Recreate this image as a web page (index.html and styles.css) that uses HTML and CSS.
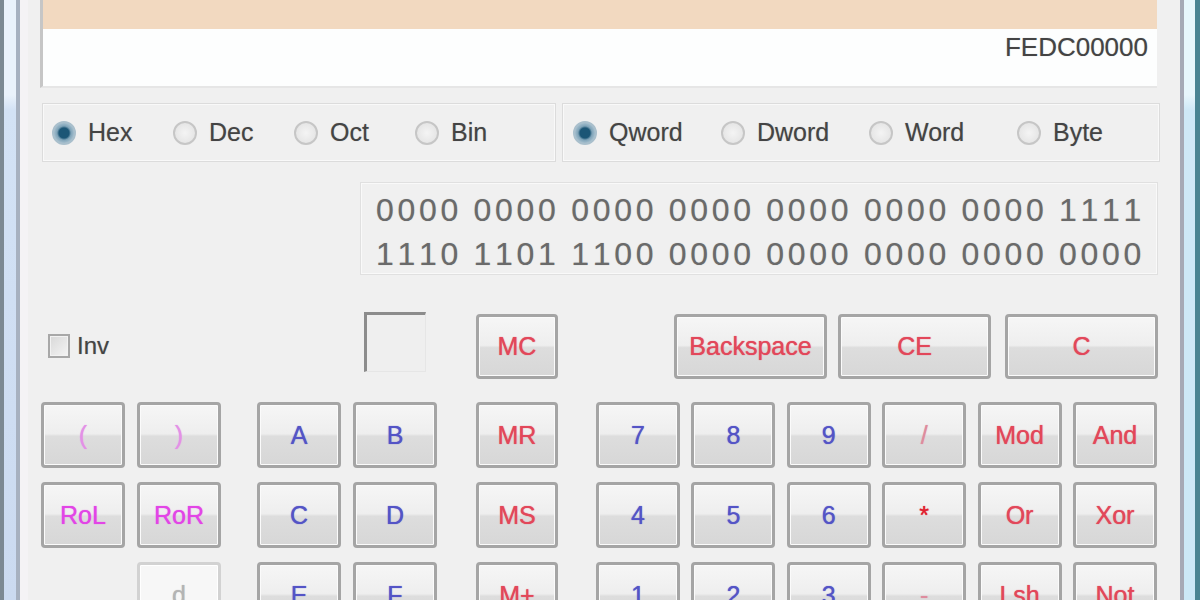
FILE: index.html
```html
<!DOCTYPE html>
<html>
<head>
<meta charset="utf-8">
<link rel="stylesheet" href="styles.css">
</head>
<body>
<div class="window">
  <div class="frame-left"><div class="fl-a"></div><div class="fl-b"></div><div class="fl-c"></div><div class="fl-d"></div></div>
  <div class="client">
    <div class="display">
      <div class="disp-top"></div>
      <div class="disp-value">FEDC00000</div>
    </div>
    <div class="radios">
      <div class="group base">
        <div class="radio on"><span class="dot"></span>Hex</div>
        <div class="radio"><span class="dot"></span>Dec</div>
        <div class="radio"><span class="dot"></span>Oct</div>
        <div class="radio"><span class="dot"></span>Bin</div>
      </div>
      <div class="group size">
        <div class="radio on"><span class="dot"></span>Qword</div>
        <div class="radio"><span class="dot"></span>Dword</div>
        <div class="radio"><span class="dot"></span>Word</div>
        <div class="radio"><span class="dot"></span>Byte</div>
      </div>
    </div>
    <div class="bits">
      <div class="bits-line">0000 0000 0000 0000 0000 0000 0000 1111</div>
      <div class="bits-line">1110 1101 1100 0000 0000 0000 0000 0000</div>
    </div>
    <div class="toprow">
      <div class="inv"><span class="check"></span>Inv</div>
      <div class="membox"></div>
      <div class="btn red mc">MC</div>
      <div class="btn red wide bksp">Backspace</div>
      <div class="btn red wide ce">CE</div>
      <div class="btn red wide clr">C</div>
    </div>
    <div class="keypad">
      <div class="grp g2">
        <div class="btn pink">(</div>
        <div class="btn pink">)</div>
        <div class="btn magenta">RoL</div>
        <div class="btn magenta">RoR</div>
        <div class="empty"></div>
        <div class="btn disabled">d</div>
      </div>
      <div class="grp g2 gap-a">
        <div class="btn blue">A</div>
        <div class="btn blue">B</div>
        <div class="btn blue">C</div>
        <div class="btn blue">D</div>
        <div class="btn blue">E</div>
        <div class="btn blue">F</div>
      </div>
      <div class="grp g1 gap-b">
        <div class="btn red">MR</div>
        <div class="btn red">MS</div>
        <div class="btn red">M+</div>
      </div>
      <div class="grp g6 gap-c">
        <div class="btn blue">7</div>
        <div class="btn blue">8</div>
        <div class="btn blue">9</div>
        <div class="btn rose">/</div>
        <div class="btn red">Mod</div>
        <div class="btn red">And</div>
        <div class="btn blue">4</div>
        <div class="btn blue">5</div>
        <div class="btn blue">6</div>
        <div class="btn strong">*</div>
        <div class="btn red">Or</div>
        <div class="btn red">Xor</div>
        <div class="btn blue">1</div>
        <div class="btn blue">2</div>
        <div class="btn blue">3</div>
        <div class="btn rose">-</div>
        <div class="btn red">Lsh</div>
        <div class="btn red">Not</div>
      </div>
    </div>
  </div>
  <div class="frame-right"><div class="fr-a"></div><div class="fr-b"></div><div class="fr-c"></div></div>
</div>
</body>
</html>
```
FILE: styles.css
```css
html, body {
  margin: 0;
  padding: 0;
}
body {
  width: 1200px;
  height: 600px;
  overflow: hidden;
  background: #f0f0f0;
  font-family: "Liberation Sans", Arial, sans-serif;
}
.window {
  display: flex;
  height: 600px;
}
.frame-left {
  display: flex;
  width: 28px;
  flex: none;
}
.fl-a { width: 4px; background: #7c8993; }
.fl-b { width: 12px; background: linear-gradient(#eaf2fb 0, #eaf2fb 95px, #d3e2f5 110px, #cbdaf0 100%); }
.fl-c { width: 4px; background: #a7b1c0; }
.fl-d { width: 8px; background: #f4f3f5; }

.client {
  width: 1152px;
  flex: none;
  box-sizing: border-box;
  padding-left: 12px;
  background: #f0f0f0;
}
.frame-right {
  display: flex;
  width: 20px;
  flex: none;
}
.fr-a { width: 4px; background: #a6a9b6; }
.fr-b { width: 11px; background: linear-gradient(#e8f6fc 0, #e8f6fc 95px, #cfe8f7 110px, #cce8f7 100%); }
.fr-c { width: 5px; background: #4a8493; }

/* display */
.display {
  width: 1117px;
  height: 88px;
  box-sizing: border-box;
  border-left: 3px solid #c6c6c6;
  border-bottom: 2px solid #e6e6e6;
  background: #fdfefe;
}
.disp-top {
  height: 29px;
  background: #f2d9c0;
}
.disp-value {
  padding: 3px 9px 0 0;
  text-align: right;
  font-size: 26px;
  line-height: 30px;
  color: #444444;
  text-shadow: 0 0 1px rgba(0, 0, 0, 0.3);
}

/* radio groups */
.radios {
  display: flex;
  gap: 6px;
  margin: 15px 0 0 2px;
}
.group {
  height: 59px;
  box-sizing: border-box;
  border: 1px solid #dcdcdc;
  box-shadow: inset 0 0 0 1px #f9f9f9;
  display: grid;
  align-items: center;
}
.group.base {
  width: 514px;
  padding-left: 9px;
  grid-template-columns: repeat(4, 121px);
}
.group.size {
  width: 598px;
  padding-left: 10px;
  grid-template-columns: repeat(4, 148px);
}
.radio {
  display: flex;
  align-items: center;
  gap: 12px;
  font-size: 25px;
  color: #444444;
  text-shadow: 0 0 1px rgba(0, 0, 0, 0.3);
}
.dot {
  width: 24px;
  height: 24px;
  flex: none;
  box-sizing: border-box;
  border-radius: 50%;
  border: 2px solid #c6c6c6;
  background: radial-gradient(circle, #f4f4f4 0, #e0e0e0 100%);
}
.radio.on .dot {
  border-color: #a9bfcc;
  background: radial-gradient(circle, #1c5676 0, #1c5676 5px, #7fa3b8 7px, #d3e1e9 100%);
}

/* binary display */
.bits {
  width: 798px;
  height: 93px;
  box-sizing: border-box;
  margin: 20px 0 0 320px;
  padding: 5px 0 0 15px;
  border: 1px solid #e0e0e0;
  box-shadow: inset 0 0 0 1px #f9f9f9;
  font-size: 32px;
  line-height: 44px;
  letter-spacing: 3.7px;
  word-spacing: -1px;
  font-kerning: none;
  font-variant-numeric: tabular-nums;
  color: #6a6a6a;
}
.bits-line {
  white-space: pre;
  text-shadow: 0 0 1px rgba(0, 0, 0, 0.25);
}

/* buttons */
.btn {
  box-sizing: border-box;
  height: 66px;
  border: 3px solid #a5a5a5;
  border-radius: 4px;
  box-shadow: inset 0 0 0 1px #fbfbfb;
  background: linear-gradient(#f6f6f6 0%, #eeeeee 48%, #dddddd 52%, #d7d7d7 100%);
  display: flex;
  align-items: center;
  justify-content: center;
  font-size: 25px;
  text-shadow: 0 0 1px currentColor;
}
.red { color: #e2475a; }
.blue { color: #5454c6; }
.pink { color: #e391e6; }
.magenta { color: #e245e6; }
.rose { color: #de8c9e; }
.strong { color: #e0202f; }
.disabled {
  color: #b4b4b4;
  border-color: #d2d2d2;
  background: #f7f7f7;
  box-shadow: inset 0 0 0 1px #ffffff;
}

/* top row */
.toprow {
  display: flex;
  align-items: center;
  height: 68px;
  margin: 37px 0 0 1px;
}
.inv {
  width: 323px;
  box-sizing: border-box;
  padding-left: 7px;
  display: flex;
  align-items: center;
  gap: 7px;
  font-size: 24px;
  color: #444444;
  text-shadow: 0 0 1px rgba(0, 0, 0, 0.3);
}
.check {
  width: 22px;
  height: 24px;
  box-sizing: border-box;
  border: 2px solid #a8a8a8;
  background: linear-gradient(135deg, #d8d8d8, #f4f4f4);
  box-shadow: inset 0 0 0 1px #f2f2f2;
}
.membox {
  align-self: flex-start;
  width: 62px;
  height: 60px;
  box-sizing: border-box;
  border-top: 3px solid #8c8c8c;
  border-left: 3px solid #8c8c8c;
  border-right: 1px solid #e6e6e6;
  border-bottom: 1px solid #e6e6e6;
  background: #efefef;
}
.toprow .btn { height: 65px; }
.mc { width: 82px; margin-left: 50px; }
.wide { width: 153px; }
.bksp { margin-left: 116px; }
.ce { margin-left: 11px; }
.clr { margin-left: 14px; }

/* keypad */
.keypad {
  display: flex;
  align-items: flex-start;
  margin: 22px 0 0 1px;
}
.grp {
  display: grid;
  grid-auto-rows: 66px;
  row-gap: 14px;
}
.g2 {
  grid-template-columns: repeat(2, 84px);
  column-gap: 12px;
}
.g1 {
  grid-template-columns: 82px;
}
.g6 {
  grid-template-columns: repeat(6, 84px);
  column-gap: 11.4px;
}
.gap-a { margin-left: 36px; }
.gap-b { margin-left: 39px; }
.gap-c { margin-left: 38px; }
```
